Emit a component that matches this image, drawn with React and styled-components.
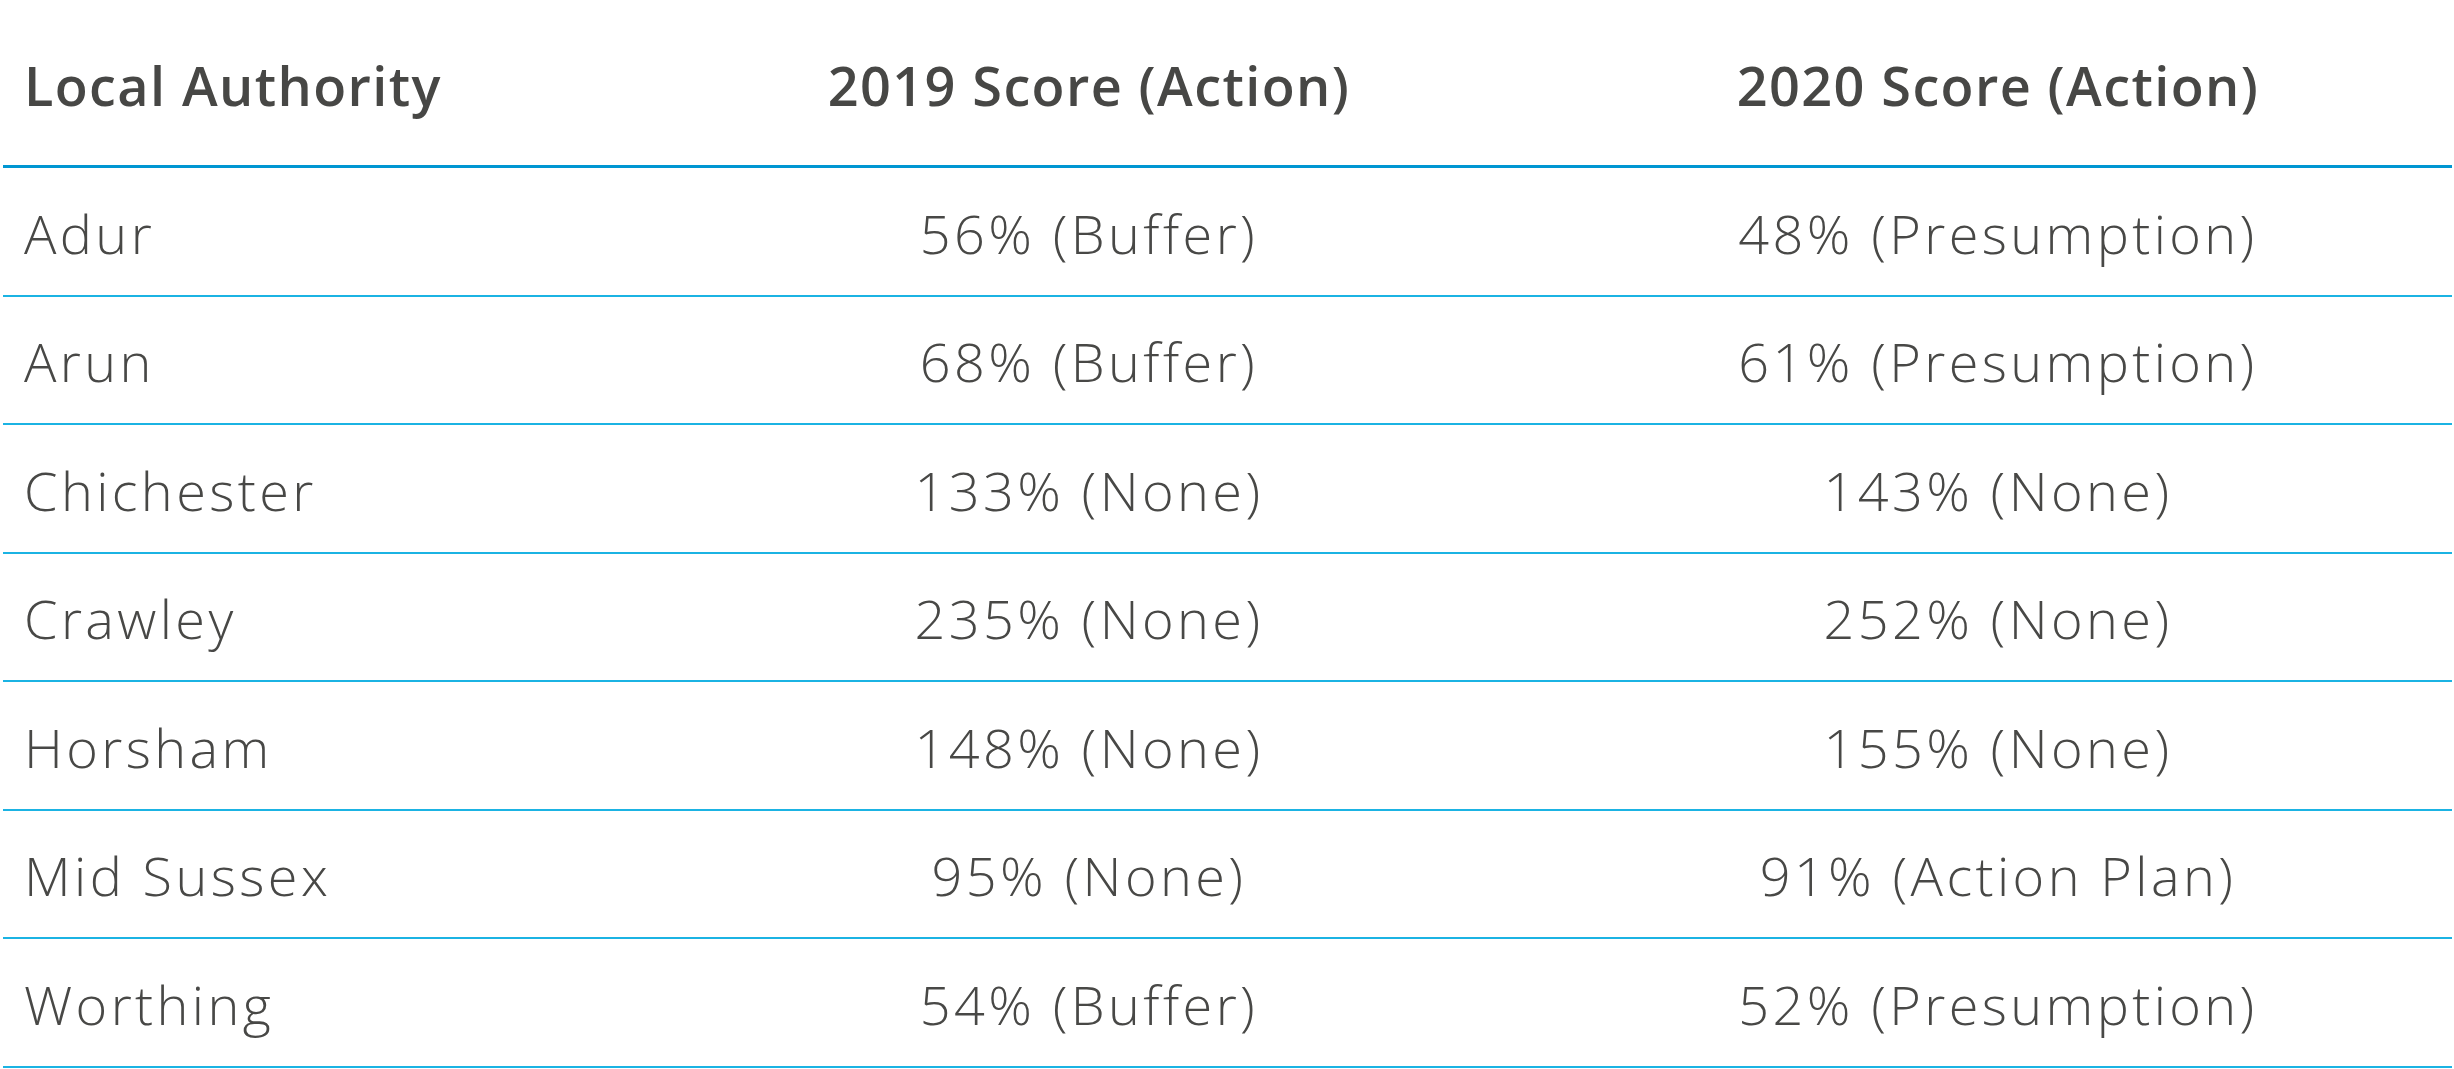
import React from "react";
import styled, { createGlobalStyle } from "styled-components";

const GlobalStyle = createGlobalStyle`
  html, body {
    margin: 0;
    padding: 0;
    background: #ffffff;
  }
  body {
    font-family: "Open Sans", Lato, sans-serif;
    color: #484846;
  }
`;

const rows = [
  ["Adur", "56% (Buffer)", "48% (Presumption)"],
  ["Arun", "68% (Buffer)", "61% (Presumption)"],
  ["Chichester", "133% (None)", "143% (None)"],
  ["Crawley", "235% (None)", "252% (None)"],
  ["Horsham", "148% (None)", "155% (None)"],
  ["Mid Sussex", "95% (None)", "91% (Action Plan)"],
  ["Worthing", "54% (Buffer)", "52% (Presumption)"],
];

export default function App() {
  return (
    <>
      <GlobalStyle />
      <Page>
        <Table>
          <HeadRow>
            <Cell>Local Authority</Cell>
            <Cell center>2019 Score (Action)</Cell>
            <Cell center>2020 Score (Action)</Cell>
          </HeadRow>
          {rows.map((r) => (
            <Row key={r[0]}>
              <Cell>{r[0]}</Cell>
              <Cell center>{r[1]}</Cell>
              <Cell center>{r[2]}</Cell>
            </Row>
          ))}
        </Table>
      </Page>
    </>
  );
}

const Page = styled.div`
  width: 2454px;
  padding: 0 2px 0 3px;
  box-sizing: border-box;
`;

const Table = styled.div`
  display: flex;
  flex-direction: column;
`;

const HeadRow = styled.div`
  display: grid;
  grid-template-columns: 631px 910px 1fr;
  align-items: center;
  height: 168px;
  padding-top: 4px;
  box-sizing: border-box;
  border-bottom: 3px solid #0096d2;
  font-size: 54px;
  font-weight: 600;
  letter-spacing: 1.4px;
  color: #474745;
`;

const Row = styled.div`
  display: grid;
  grid-template-columns: 631px 910px 1fr;
  align-items: center;
  height: 128.5px;
  padding-top: 3px;
  box-sizing: border-box;
  border-bottom: 2px solid #1bb3e3;
  font-size: 54px;
  font-weight: 350;
  letter-spacing: 3.4px;
`;

const Cell = styled.div`
  padding-left: ${(p) => (p.center ? "0" : "21px")};
  text-align: ${(p) => (p.center ? "center" : "left")};
  white-space: nowrap;
`;
